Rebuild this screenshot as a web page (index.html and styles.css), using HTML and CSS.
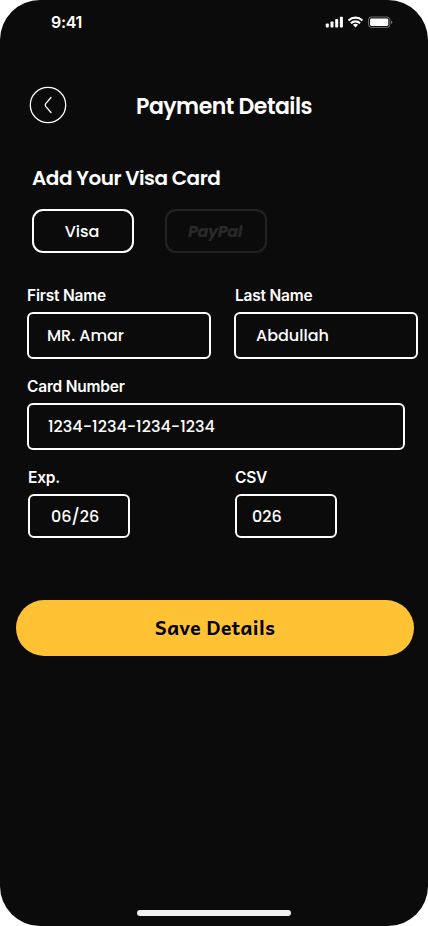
FILE: index.html
```
<!DOCTYPE html>
<html lang="en">
<head>
<meta charset="utf-8">
<meta name="viewport" content="width=device-width, initial-scale=1">
<title>Payment Details</title>
<link rel="stylesheet" href="styles.css">
</head>
<body>
<main class="phone">
  <header class="status">
    <span class="time">9:41</span>
    <svg class="status-icons" width="68" height="14" viewBox="0 0 68 14" aria-hidden="true">
      <g fill="#fff">
        <rect x=".8" y="7.5" width="3" height="4" rx=".8"/>
        <rect x="5.5" y="5.5" width="3" height="6" rx=".8"/>
        <rect x="10.2" y="3" width="3" height="8.500" rx=".8"/>
        <rect x="14.900" y=".7" width="3" height="10.800" rx=".8"/>
        <path d="M30.500 11.500l-2.600-2.700a3.900 3.900 0 0 1 5.200 0z"/>
      </g>
      <g fill="none" stroke="#fff" stroke-width="2.100">
        <path d="M23.500 4.400a10.300 10.300 0 0 1 14 0"/>
        <path d="M25.900 7.200a6.800 6.800 0 0 1 9.200 0"/>
      </g>
      <rect x="43.500" y="1" width="21.300" height="10.400" rx="2.800" fill="none" stroke="#fff" stroke-opacity=".4"/>
      <rect x="45" y="2.500" width="18.300" height="7.400" rx="1.400" fill="#fff"/>
      <path d="M66 4.500v3.600q1.300-.5 1.300-1.800T66 4.500z" fill="#fff" fill-opacity=".45"/>
    </svg>
  </header>

  <nav class="topbar">
    <svg class="back" width="38" height="38" viewBox="0 0 38 38" role="img" aria-label="Back">
      <circle cx="19" cy="19" r="17.700" fill="none" stroke="#fff" stroke-width="1.300"/>
      <path d="M22 11.500l-5.300 6.200q-1 1.300 0 2.600L22 26.500" fill="none" stroke="#fff" stroke-width="1.300" stroke-linecap="round"/>
    </svg>
    <h1 class="title">Payment Details</h1>
  </nav>

  <section class="methods">
    <h2 class="subtitle">Add Your Visa Card</h2>
    <div class="tabs">
      <button class="tab tab-visa">Visa</button>
      <button class="tab tab-paypal">PayPal</button>
    </div>
  </section>

  <form class="form">
    <div class="row names">
      <div class="field">
        <span class="label">First Name</span>
        <div class="box first">MR. Amar</div>
      </div>
      <div class="field">
        <span class="label last-label">Last Name</span>
        <div class="box last">Abdullah</div>
      </div>
    </div>
    <div class="field card">
      <span class="label">Card Number</span>
      <div class="box number">1234-1234-1234-1234</div>
    </div>
    <div class="row codes">
      <div class="field">
        <span class="label">Exp.</span>
        <div class="box small exp">06/26</div>
      </div>
      <div class="field">
        <span class="label">CSV</span>
        <div class="box small csv">026</div>
      </div>
    </div>
    <button class="save" type="button">Save Details</button>
  </form>
  <div class="home"></div>
</main>
</body>
</html>
```
FILE: styles.css
```
* { box-sizing: border-box; }
body { margin: 0; background: #fff; }
.phone {
  display: flex;
  flex-direction: column;
  width: 428px;
  height: 926px;
  border-radius: 40px;
  background: #0b0b0b;
  color: #fff;
  font-family: Poppins, Inter, "Liberation Sans", sans-serif;
  overflow: hidden;
}
h1, h2 { margin: 0; }
button { padding: 0; font-family: inherit; color: inherit; background: none; }
.status {
  display: flex;
  justify-content: space-between;
  height: 86px;
  padding: 12px 35px 0 51px;
}
.time { font: 600 16px/20px Inter, sans-serif; letter-spacing: -.3px; }
.status-icons { margin-top: 4px; }
.topbar { display: flex; height: 80px; padding-left: 29px; }
.back { flex: none; }
.title {
  margin-left: 69px;
  font-size: 22px;
  font-weight: 600;
  line-height: 42px;
  letter-spacing: -.5px;
  white-space: nowrap;
}
.methods { padding-left: 32px; }
.subtitle {
  height: 43px;
  font-size: 20px;
  font-weight: 600;
  line-height: 24px;
  letter-spacing: -.5px;
  white-space: nowrap;
}
.tabs { display: flex; gap: 31px; }
.tab {
  width: 102px;
  height: 44px;
  border: 2px solid #fff;
  border-radius: 11px;
  padding: 2px 2px 0 0;
  font-size: 16px;
  font-weight: 500;
  line-height: 24px;
}
.tab-paypal {
  border-color: #232323;
  color: #292929;
  font-weight: 700;
  font-style: italic;
  letter-spacing: -.4px;
}
.form { padding: 33px 0 0 27px; }
.row { display: flex; }
.names { gap: 23px; height: 91px; }
.card { height: 91px; }
.codes { gap: 105px; height: 132px; padding-left: 1px; }
.field { display: flex; flex-direction: column; }
.label { height: 26px; font: 600 15.500px/20px Inter, sans-serif; letter-spacing: -.2px; }
.last-label { padding-left: 1px; }
.box {
  display: flex;
  align-items: center;
  width: 184px;
  height: 47px;
  border: 2px solid #fff;
  border-radius: 6px;
  padding-left: 18px;
  font-size: 16px;
  font-weight: 500;
}
.last { padding-left: 20px; }
.number { width: 378px; padding-left: 19px; }
.small { width: 102px; height: 44px; }
.exp { padding-left: 21px; }
.csv { padding-left: 15px; }
.save {
  display: block;
  width: 398px;
  height: 56px;
  margin-left: -11px;
  padding-bottom: 2px;
  border: 0;
  border-radius: 28px;
  background: #fec234;
  color: #000;
  font: 700 20px/28px Andika, ABeeZee, "Noto Sans", sans-serif;
}
.home { width: 154px; height: 6px; margin: auto auto 10px 137px; border-radius: 3px; background: #f1f1f1; }
```
